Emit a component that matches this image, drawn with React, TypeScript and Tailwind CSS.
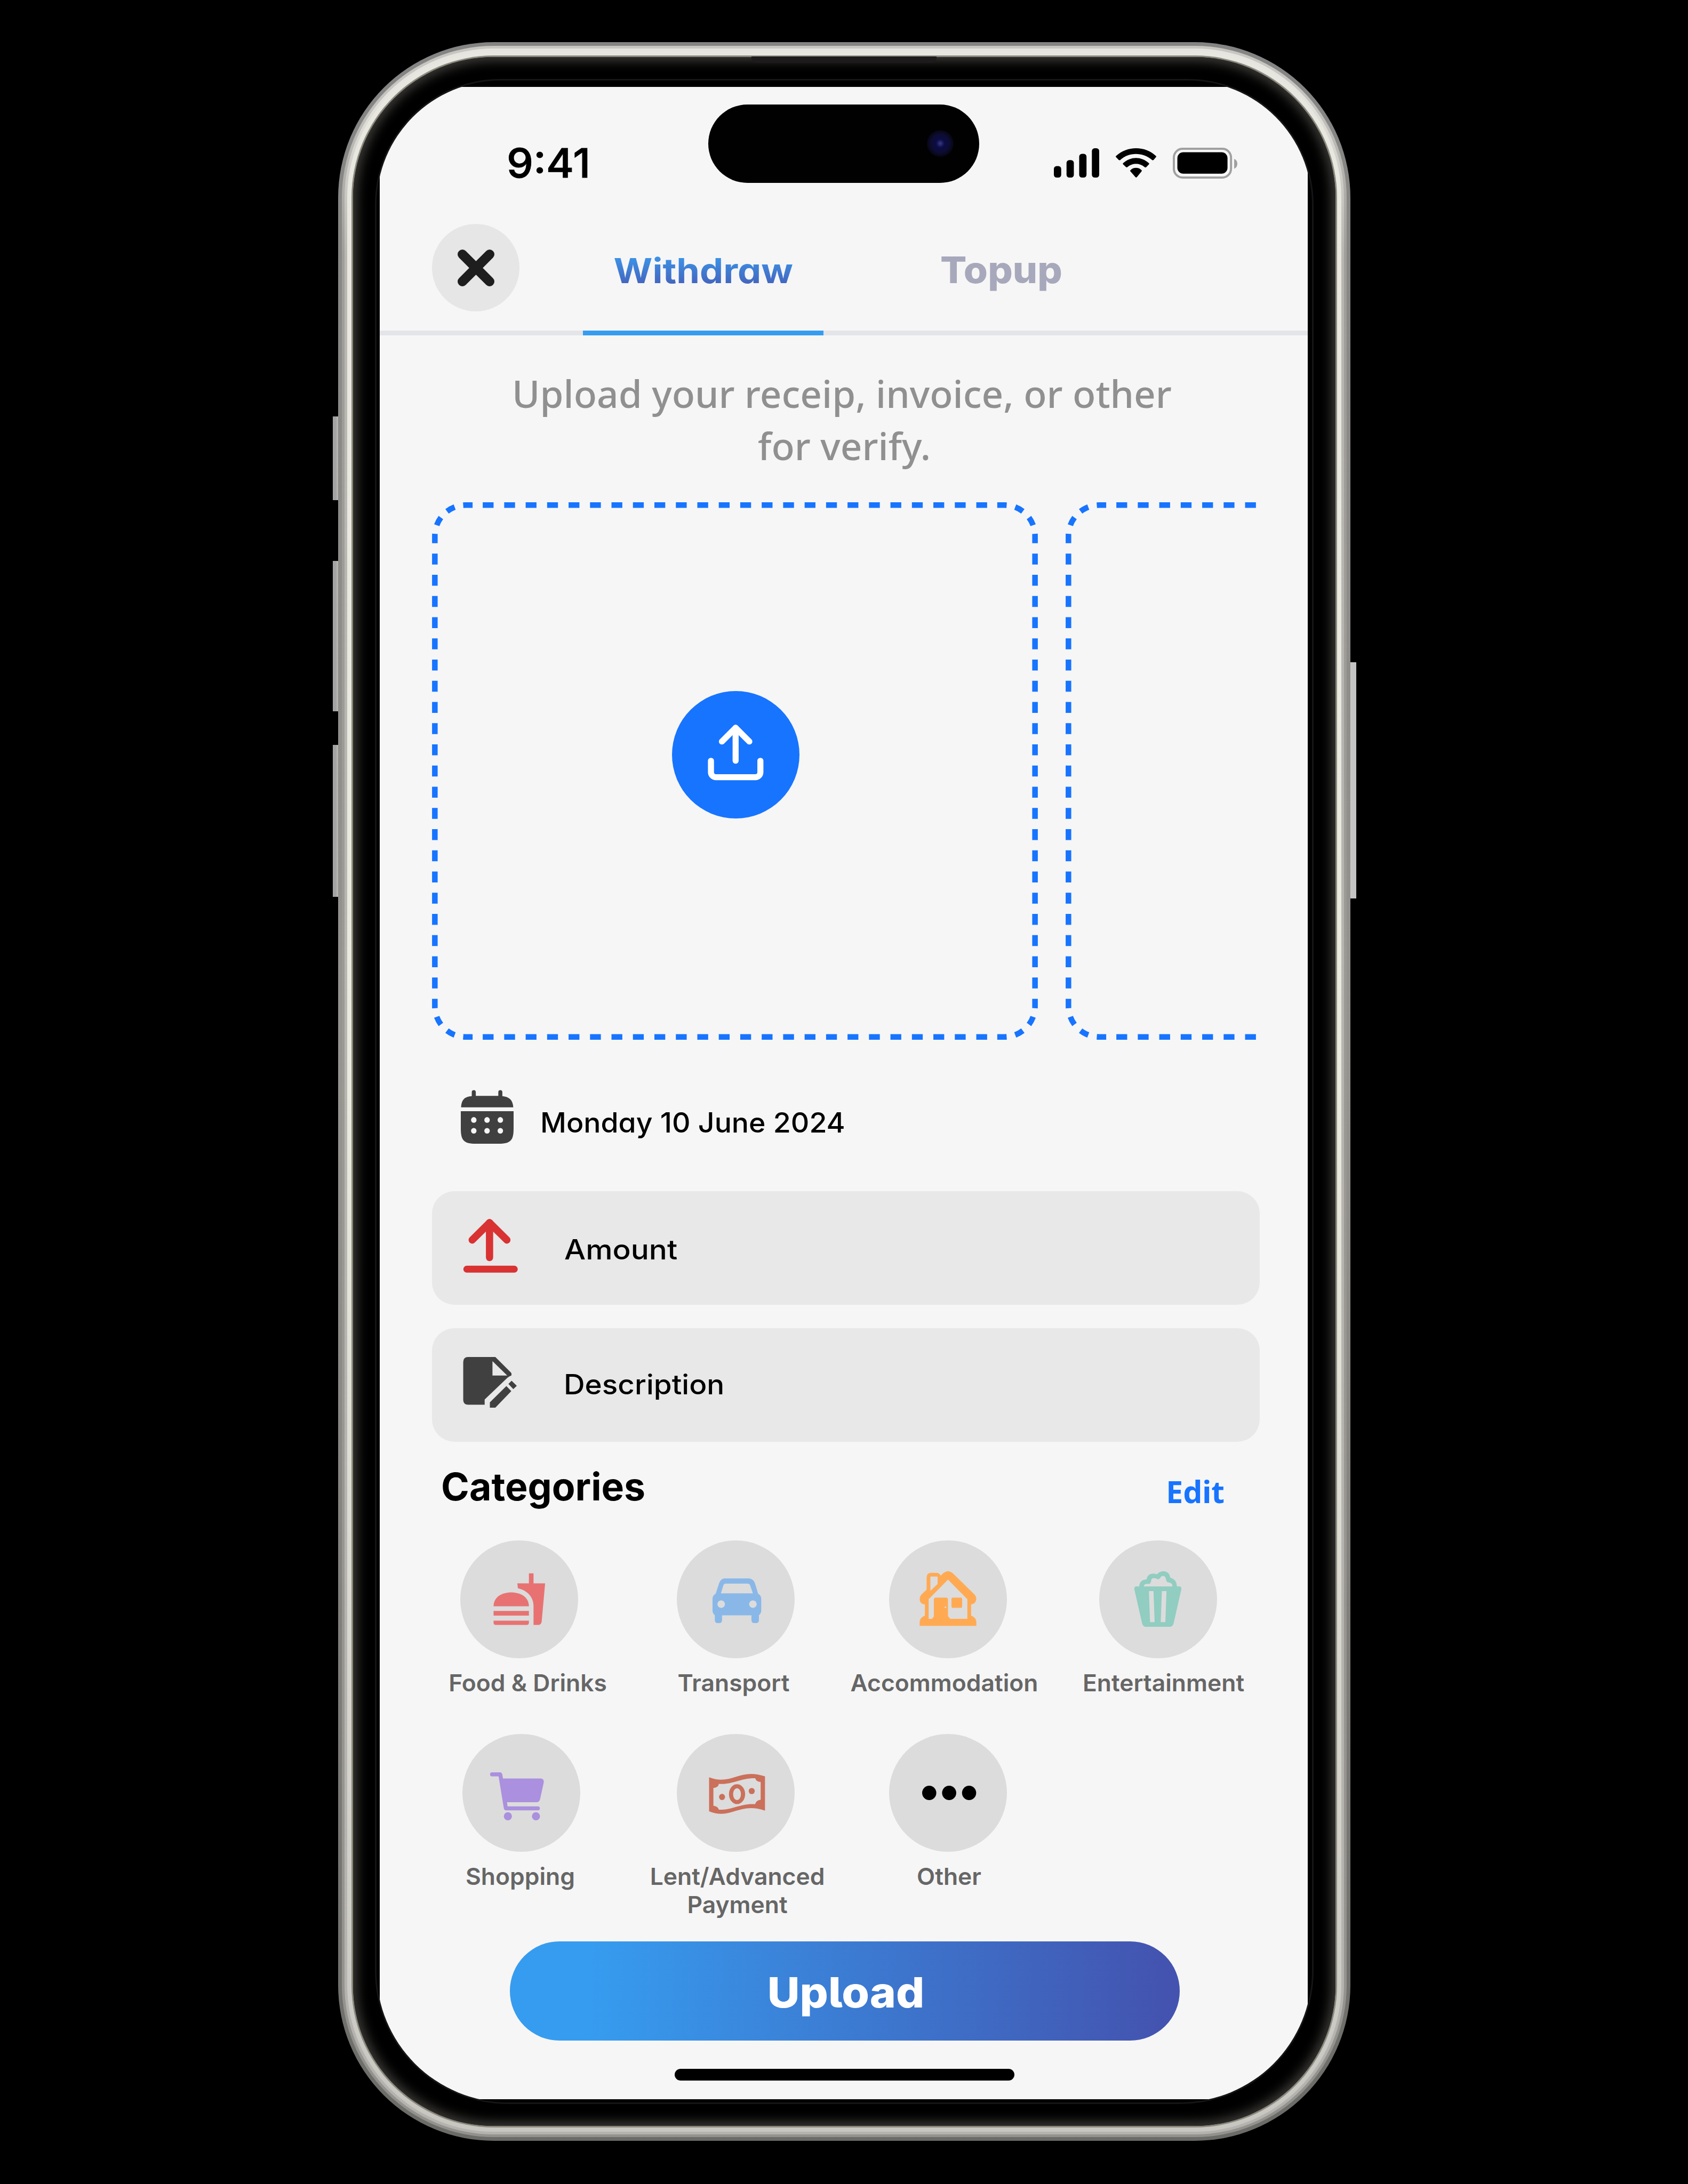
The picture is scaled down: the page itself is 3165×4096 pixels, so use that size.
import React from "react";

const INTER = "font-['Inter',sans-serif]";
const NOTO = "font-['Noto_Sans',sans-serif]";

function SignalIcon() {
  return (
    <svg className="h-[55px] w-[85px]" viewBox="0 0 130 84" preserveAspectRatio="none">
      <rect x="0" y="51" width="21" height="33" rx="8" />
      <rect x="36.3" y="34" width="21" height="50" rx="8" />
      <rect x="72.6" y="16" width="21" height="68" rx="8" />
      <rect x="109" y="0" width="21" height="84" rx="8" />
    </svg>
  );
}

function WifiIcon() {
  return (
    <svg className="h-[55px] w-[76px]" viewBox="829 564 121 147" preserveAspectRatio="none">
      <path d="M830 603C862 551 918 551 949 603Q951 606 949 609L942 623Q940 626 937 622C910 583 868 583 843 622Q841 626 838 623L830 609Q828 606 830 603Z" />
      <path d="M851 639C874 604 905 604 928 639Q930 642 928 645L920 659Q918 662 915 658C899 637 880 637 864 658Q862 661 860 659L851 645Q849 642 851 639Z" />
      <path d="M873 674C881 658 898 658 906 674Q908 677 906 680L892 709Q890 712 888 709L873 680Q871 677 873 674Z" />
    </svg>
  );
}

function BatteryIcon() {
  return (
    <svg className="-mt-[1px] h-[58px] w-[121px]" viewBox="0 0 184 88" preserveAspectRatio="none">
      <rect x="3" y="3" width="163" height="82" rx="25" fill="none" stroke="#a0a0a0" strokeWidth="6" />
      <rect x="13" y="13" width="143" height="61" rx="17" />
      <path d="M175 32Q184 36 184 46T175 60Z" fill="#a0a0a0" />
    </svg>
  );
}

function DashedFrame() {
  const corner = "M116 8H96A88 88 0 0 0 8 96V117";
  return (
    <svg
      className="absolute inset-0 h-full w-full"
      viewBox="0 0 1733 1538"
      fill="none"
      stroke="#1774ff"
      strokeWidth="16"
    >
      <g strokeDasharray="31 30.39">
        <path d="M145 8H1589" />
        <path d="M145 1530H1589" />
      </g>
      <g strokeDasharray="31 29.65">
        <path d="M8 147V1392" />
        <path d="M1725 147V1392" />
      </g>
      <g strokeDasharray="27 25 25 25 25 25 27 40">
        <path d={corner} />
        <path d={corner} transform="matrix(-1 0 0 1 1733 0)" />
        <path d={corner} transform="matrix(1 0 0 -1 0 1538)" />
        <path d={corner} transform="matrix(-1 0 0 -1 1733 1538)" />
      </g>
    </svg>
  );
}

function UploadIcon() {
  return (
    <svg
      className="h-full w-full"
      viewBox="225 233 1096 1096"
      fill="none"
      stroke="#fff"
      strokeWidth="52"
      strokeLinecap="round"
      strokeLinejoin="round"
    >
      <path d="M772 832V549" />
      <path d="M654 667L772 549L890 667" />
      <path d="M560 833V931A43 43 0 0 0 603 974H942A43 43 0 0 0 985 931V833" />
    </svg>
  );
}

function CalendarIcon() {
  return (
    <svg className="h-[101px] w-[99px]" viewBox="145 312 183 179" preserveAspectRatio="none" fill="#404040">
      <path d="M146 370C148 342 160 335 183 333V320a7 7 0 0 1 14 0V332H275V320a7 7 0 0 1 14 0V333C312 335 325 345 327 370Z" />
      <path d="M145 383H328V440C328 480 318 491 275 491H197C155 491 145 480 145 440Z" />
      <g fill="#f6f6f6">
        {[190, 236, 282].map((x) => (
          <g key={x}>
            <circle cx={x} cy="412" r="9.5" />
            <circle cx={x} cy="448" r="9.5" />
          </g>
        ))}
      </g>
    </svg>
  );
}

function AmountIcon() {
  return (
    <svg
      className="h-[101px] w-[103px]"
      viewBox="153 742 190 179"
      preserveAspectRatio="none"
      fill="none"
      stroke="#d93232"
      strokeWidth="25"
      strokeLinecap="round"
      strokeLinejoin="round"
    >
      <path d="M245 870V755" />
      <path d="M185 812L245 755L305 812" />
      <path d="M166 909H331" strokeWidth="23" />
    </svg>
  );
}

function NoteIcon() {
  return (
    <svg className="h-[95px] w-[101px]" viewBox="152 1202 186 169" preserveAspectRatio="none" fill="#404040">
      <path
        fillRule="evenodd"
        d="M170 1202H264L318 1254Q321 1258 319 1264Q312 1266 305 1272L227 1344V1361H170Q153 1361 153 1345V1219Q153 1202 170 1202ZM254 1216V1264H305Z"
      />
      <path d="M302 1299L319 1316L264 1371H245V1353Z" />
      <path d="M320 1281L338 1298L326 1309L309 1292Z" />
    </svg>
  );
}

const iconClass = "h-full w-full";

function FoodIcon() {
  return (
    <svg className={iconClass} viewBox="142 290 407 379" preserveAspectRatio="none" fill="#e87272">
      <path d="M257 502C257 472 285 457 318 457S379 472 379 502Z" />
      <path d="M257 517H379V532H257Z" />
      <path d="M257 548H379V554Q379 562 371 562H265Q257 562 257 554Z" />
      <path d="M379 428V396H395V428H435L423 552Q421 562 411 562H395V500C395 470 370 450 341 444L339 428Z" />
    </svg>
  );
}

function CarIcon() {
  return (
    <svg className={iconClass} viewBox="890 290 409 379" preserveAspectRatio="none" fill="#89b8e8">
      <path
        fillRule="evenodd"
        d="M1057 412H1138Q1155 412 1161 427L1172 461Q1183 467 1183 478V517Q1183 524 1175 531V546Q1175 556 1165 556H1159Q1149 556 1149 546V531H1047V546Q1047 556 1038 556H1032Q1022 556 1022 546V531Q1014 524 1014 517V478Q1014 467 1025 461L1037 427Q1043 412 1057 412ZM1061 429Q1053 429 1051 436L1043 460H1154L1145 436Q1143 429 1135 429ZM1044 483a13 12 0 1 0 .1 0ZM1154 483a13 12 0 1 0 .1 0Z"
      />
    </svg>
  );
}

function HouseIcon() {
  return (
    <svg className={iconClass} viewBox="200 290 408 379" preserveAspectRatio="none" fill="#ffaa53">
      <path
        fillRule="evenodd"
        d="M306 565V552Q307 538 324 532V496Q306 494 306 478Q306 470 313 463L330 448V410Q330 394 346 394H362Q374 394 379 403L388 395Q404 383 420 395L495 463Q502 470 502 478Q500 494 484 496V532Q501 538 502 552V565ZM345 406Q343 406 343 408V452L368 430V408Q368 406 366 406ZM404 416L337 479V542H349Q351 538 355 535V480Q355 474 362 474H397Q404 474 404 480V534Q408 537 411 542H471V479Z"
      />
      <rect x="416" y="474" width="37" height="33" rx="5" />
      <ellipse cx="395" cy="505" rx="3" ry="2.5" fill="#dcdcdc" />
    </svg>
  );
}

function PopcornIcon() {
  return (
    <svg className={iconClass} viewBox="925 290 408 379" preserveAspectRatio="none" fill="#91cdc1">
      <path
        fillRule="evenodd"
        d="M1052 438H1204Q1211 440 1209 448L1183 555Q1180 568 1168 568H1088Q1076 568 1073 555L1047 448Q1045 440 1052 438ZM1097 453L1101 553H1117L1113 453ZM1142 453L1138 553H1154L1158 453Z"
      />
      <path d="M1064 440C1063 425 1072 416 1089 415C1092 399 1106 393 1125 399C1138 384 1168 385 1171 410C1188 414 1194 425 1194 440H1178C1180 431 1176 427 1165 425Q1158 424 1157 418Q1155 405 1147 404Q1139 404 1136 411Q1130 418 1124 413C1110 410 1106 411 1105 420Q1103 430 1097 430C1085 429 1080 431 1079 440Z" />
    </svg>
  );
}

function CartIcon() {
  return (
    <svg className={iconClass} viewBox="150 911 407 378" preserveAspectRatio="none" fill="#aa90de">
      <path d="M252 1034H280Q287 1034 288 1042L290 1054H421Q432 1055 431 1066L418 1121Q415 1130 406 1130H304L306 1143H411a6.5 6.5 0 0 1 0 13H301Q294 1156 293 1149L275 1047H252a6.5 6.5 0 0 1 0-13Z" />
      <ellipse cx="307" cy="1175" rx="14" ry="13" />
      <ellipse cx="404" cy="1175" rx="14" ry="13" />
    </svg>
  );
}

function CashIcon() {
  return (
    <svg className={iconClass} viewBox="890 911 409 378" preserveAspectRatio="none" fill="#cb705a">
      <path
        fillRule="evenodd"
        d="M1002 1050C1080 1078 1105 1019 1196 1047V1157C1105 1128 1080 1188 1002 1159ZM1017 1084V1141Q1033 1143 1036 1154C1085 1155 1110 1133 1162 1136Q1165 1124 1181 1122V1065Q1166 1065 1162 1053C1110 1052 1080 1075 1036 1071Q1034 1083 1017 1084Z"
      />
      <path fillRule="evenodd" d="M1099 1072a28 32 0 1 0 .1 0ZM1099 1085a13.500 19 0 1 1-.1 0Z" />
      <ellipse cx="1047" cy="1113" rx="10.500" ry="10" />
      <ellipse cx="1150" cy="1094" rx="10.500" ry="10" />
    </svg>
  );
}

function DotsIcon() {
  return (
    <svg className={iconClass} viewBox="200 911 408 378" preserveAspectRatio="none">
      <ellipse cx="339" cy="1100" rx="24.500" ry="23" />
      <ellipse cx="408" cy="1100" rx="24.500" ry="23" />
      <ellipse cx="477" cy="1100" rx="24.500" ry="23" />
    </svg>
  );
}

function Category({
  icon,
  label,
  shift = "",
  labelShift = "",
}: {
  icon: React.ReactNode;
  label: React.ReactNode;
  shift?: string;
  labelShift?: string;
}) {
  return (
    <div className={`flex w-[221px] flex-col items-center ${shift}`}>
      <div className="h-[221px] w-[221px] shrink-0 rounded-full bg-[#dcdcdc]">{icon}</div>
      <div
        className={`${INTER} mt-[20px] text-center text-[44.4px] leading-[53px] font-semibold whitespace-nowrap text-[#666666] ${labelShift}`}
      >
        {label}
      </div>
    </div>
  );
}

function Screen() {
  return (
    <div className="flex h-[3774px] w-[1740px] flex-col bg-[#f6f6f6] text-black">
      <div className="flex h-[257px] shrink-0 justify-between pt-[115px] pr-[132px] pl-[238px]">
        <div className={`${INTER} origin-left scale-x-[1.045] text-[76px] leading-[55px] font-medium [-webkit-text-stroke:1px_black]`}>
          9:41
        </div>
        <div className="flex gap-[31px]">
          <SignalIcon />
          <WifiIcon />
          <BatteryIcon />
        </div>
      </div>

      <div className="flex h-[209px] shrink-0 border-b-[9px] border-[#e4e5e9] pl-[98px]">
        <div className="flex h-[164px] w-[164px] items-center justify-center rounded-full bg-[#e6e6e6]">
          <svg className="h-[69px] w-[69px]" viewBox="0 0 69 69" stroke="#1e1e1e" strokeWidth="18" strokeLinecap="round">
            <path d="M9 9L60 60M60 9L9 60" />
          </svg>
        </div>
        <div className="ml-[119px] h-[209px] w-[451px] border-b-[9px] border-[#369cef] text-center">
          <span
            className={`${INTER} inline-block scale-x-[1.08] bg-linear-to-b from-[#369cef] from-30% to-[#4353af] to-75% bg-clip-text text-[65px] leading-[176px] font-bold text-transparent [font-feature-settings:'cv11']`}
          >
            Withdraw
          </span>
        </div>
        <div
          className={`${INTER} ml-[108px] w-[451px] scale-x-[1.06] text-center text-[69px] leading-[173px] font-extrabold text-[#a7a8bb]`}
        >
          Topup
        </div>
      </div>

      <div className={`${NOTO} mt-[60px] pr-[7px] text-center text-[71px] leading-[98px] font-medium text-[#909090]`}>
        Upload your receip, invoice, or other
        <br />
        <span className="pl-[9px]">for verify.</span>
      </div>

      <div className="mt-[57px] ml-[98px] flex w-[1552px] shrink-0 gap-[52px] overflow-hidden">
        <div className="relative h-[1008px] w-[1136px] shrink-0">
          <DashedFrame />
          <div className="mt-[354px] ml-[450px] h-[239px] w-[239px] rounded-full bg-[#1774ff]">
            <UploadIcon />
          </div>
        </div>
        <div className="relative h-[1008px] w-[1136px] shrink-0">
          <DashedFrame />
        </div>
      </div>

      <div className="mt-[94px] flex h-[101px] shrink-0 pl-[152px]">
        <CalendarIcon />
        <div
          className={`${INTER} ml-[50px] origin-left scale-x-[1.03] text-[52px] leading-[123px] font-medium [font-feature-settings:'cv11']`}
        >
          Monday 10 June 2024
        </div>
      </div>

      <div className="mt-[89px] ml-[98px] flex w-[1552px] shrink-0 flex-col gap-[44px]">
        <div className="flex h-[213px] rounded-[42px] bg-[#e8e8e8] pl-[58px]">
          <div className="mt-[52px]">
            <AmountIcon />
          </div>
          <div className={`${INTER} ml-[87px] origin-left scale-x-[1.09] text-[52px] leading-[220px] font-medium`}>
            Amount
          </div>
        </div>
        <div className="flex h-[213px] rounded-[42px] bg-[#e8e8e8] pl-[58px]">
          <div className="mt-[54px]">
            <NoteIcon />
          </div>
          <div className={`${INTER} ml-[88px] origin-left scale-x-[1.055] text-[52px] leading-[211px] font-medium`}>
            Description
          </div>
        </div>
      </div>

      <div className="mt-[34px] flex h-[100px] shrink-0 justify-between pr-[156px] pl-[115px]">
        <div className={`${INTER} text-[71.5px] leading-[100px] font-bold`}>Categories</div>
        <div className={`${NOTO} text-[57px] leading-[118px] font-bold text-[#1774ff]`}>Edit</div>
      </div>

      <div className="mt-[51px] ml-[151px] grid shrink-0 grid-cols-[406px_398px_394px_221px] grid-rows-[363px_389px]">
        <Category icon={<FoodIcon />} label="Food & Drinks" labelShift="translate-x-[16px]" />
        <Category icon={<CarIcon />} label="Transport" labelShift="-translate-x-[4px]" />
        <Category icon={<HouseIcon />} label="Accommodation" labelShift="-translate-x-[7px]" />
        <Category icon={<PopcornIcon />} label="Entertainment" labelShift="translate-x-[10px]" />
        <Category icon={<CartIcon />} label="Shopping" shift="translate-x-[4px]" labelShift="-translate-x-[2px]" />
        <Category
          icon={<CashIcon />}
          label={
            <>
              Lent/Advanced
              <br />
              Payment
            </>
          }
          labelShift="translate-x-[3px]"
        />
        <Category icon={<DotsIcon />} label="Other" labelShift="translate-x-[2px]" />
      </div>

      <div
        className={`${INTER} ml-[244px] flex h-[186px] w-[1256px] shrink-0 justify-center rounded-full bg-[linear-gradient(91deg,#369cef_12%,#4353af_98%)] text-[79px] leading-[191px] font-extrabold text-white [font-feature-settings:'cv05']`}
      >
        <span className="translate-x-[2px] scale-x-[1.06]">Upload</span>
      </div>
      <div className="mt-[53px] ml-[553px] h-[22px] w-[637px] shrink-0 rounded-full bg-black" />
    </div>
  );
}

export default function App() {
  return (
    <div className="relative h-[4096px] w-[3165px] overflow-hidden bg-black pt-[79px] pl-[634px]">
      <div className="absolute top-[781px] left-[624px] h-[157px] w-[20px] bg-linear-to-r from-[#a3a3a3] from-30% via-[#bdbcb8] via-45% to-[#7d7c77] to-60%" />
      <div className="absolute top-[1052px] left-[624px] h-[282px] w-[20px] bg-linear-to-r from-[#a3a3a3] from-30% via-[#bdbcb8] via-45% to-[#7d7c77] to-60%" />
      <div className="absolute top-[1397px] left-[624px] h-[285px] w-[20px] bg-linear-to-r from-[#a3a3a3] from-30% via-[#bdbcb8] via-45% to-[#7d7c77] to-60%" />
      <div className="absolute top-[1242px] left-[2520px] h-[443px] w-[23px] bg-linear-to-r from-[#8b8982] via-[#d4d2d0] via-50% to-[#c4c4c4] to-60%" />

      <div className="relative h-[3936px] w-[1898px] rounded-[292px] bg-linear-to-b from-[#848484] via-[#96948f] to-[#6b6b67] p-[7px]">
        <div className="h-full rounded-[285px] bg-linear-to-b from-[#c8c6c0] from-2% via-[#a09e99] via-10% to-[#94928e] p-[5px]">
          <div className="h-full rounded-[280px] bg-linear-to-b from-[#e6e4de] from-2% via-[#b9b7b2] via-10% to-[#b5b3ae] p-[5px]">
            <div className="h-full rounded-[275px] bg-linear-to-b from-[#e8e6e0] via-[#ebeade] to-[#c8c6c1] p-[8px]">
              <div className="h-full rounded-[267px] bg-[#8a897c] p-[3px]">
                <div className="h-full rounded-[264px] bg-black p-[41px] shadow-[inset_0_0_20px_8px_#3a3936]">
                  <div className="h-full overflow-hidden rounded-t-[236px] rounded-b-[250px] border-[3px] border-[#151516] bg-black px-[6px] pt-[12px]">
                    <Screen />
                  </div>
                </div>
              </div>
            </div>
          </div>
        </div>
      </div>

      <div className="absolute top-[106px] left-[1409px] h-[12px] w-[347px] rounded-b-[8px] bg-[#1d1b1c]" />
      <div className="absolute top-[196px] left-[1328px] h-[147px] w-[508px] rounded-full bg-[#010102]" />
      <div className="absolute top-[244px] left-[1738px] h-[50px] w-[50px] rounded-full bg-[radial-gradient(circle,#3a3a80_0%,#0c0c48_22%,#0d0c30_50%,#05040c_75%,#010102_100%)]" />
    </div>
  );
}
